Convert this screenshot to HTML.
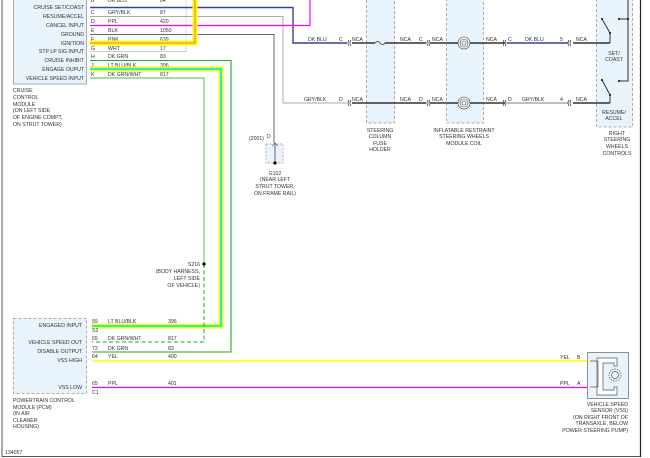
<!DOCTYPE html><html><head><style>body{margin:0;background:#fff}svg{display:block}text{font-family:"Liberation Sans",sans-serif;font-size:5.2px;fill:#333}</style></head><body>
<svg width="650" height="458" viewBox="0 0 650 458">
<rect x="0" y="0" width="650" height="458" fill="#fff"/>
<line x1="2" y1="0" x2="2" y2="457" stroke="#555" stroke-width="1"/>
<line x1="2" y1="456.5" x2="641" y2="456.5" stroke="#555"/>
<line x1="640.5" y1="0" x2="640.5" y2="457" stroke="#222" stroke-width="1.2"/>
<rect x="13.5" y="-1" width="73" height="85" fill="#e8f3fc" stroke="#999" stroke-width="0.8"/>
<g text-anchor="end">
<text x="84" y="9">CRUISE SET/COAST</text><text x="84" y="18">RESUME/ACCEL</text><text x="84" y="27">CANCEL INPUT</text><text x="84" y="36">GROUND</text><text x="84" y="45">IGNITION</text><text x="84" y="53">STP LP SIG INPUT</text><text x="84" y="62">CRUISE INHIBIT</text><text x="84" y="71">ENGAGE OUPUT</text><text x="84" y="80">VEHICLE SPEED INPUT</text>
</g>
<line x1="186" y1="0" x2="186" y2="52" stroke="#ccc" stroke-width="0.7"/>
<g>
<text x="91" y="2">B</text><text x="108" y="2">DK BLU</text><text x="160" y="2">84</text>
<text x="91" y="14">C</text><text x="108" y="14">GRY/BLK</text><text x="160" y="14">87</text>
<text x="91" y="23">D</text><text x="108" y="23">PPL</text><text x="160" y="23">420</text>
<text x="91" y="32">E</text><text x="108" y="32">BLK</text><text x="160" y="32">1050</text>
<text x="91" y="41">F</text><text x="108" y="41">PNK</text><text x="160" y="41">639</text>
<text x="91" y="50">G</text><text x="108" y="50">WHT</text><text x="160" y="50">17</text>
<text x="91" y="58">H</text><text x="108" y="58">DK GRN</text><text x="160" y="58">83</text>
<text x="91" y="67">J</text><text x="108" y="67">LT BLU/BLK</text><text x="160" y="67">396</text>
<text x="91" y="76">K</text><text x="108" y="76">DK GRN/WHT</text><text x="160" y="76">817</text>
</g>
<g fill="none" stroke-width="1">
<polyline points="90,7.5 293,7.5 293,43 347,43" stroke="#33449a" stroke-width="1.4"/>
<polyline points="90,16.5 283,16.5 283,103 347,103" stroke="#aaa"/>
<polyline points="90,25.5 310,25.5 310,0" stroke="#f0f" stroke-width="1.2"/>
<polyline points="90,34.5 274,34.5 274,143" stroke="#666"/>
<polyline points="90,43 195,43 195,0" stroke="#ff0" stroke-width="5"/>
<polyline points="90,43 195,43 195,0" stroke="#f66" stroke-width="1"/>
<polyline points="90,51.5 186,51.5" stroke="#ccc"/>
<polyline points="90,60.5 231,60.5 231,352 92,352" stroke="#2a2" stroke-width="1.1"/>
<polyline points="90,69 221,69 221,326 92,326" stroke="#ff0" stroke-width="5"/>
<polyline points="90,69 221,69 221,326 92,326" stroke="#0ee" stroke-width="1.8"/>
<polyline points="90,78 204,78 204,264" stroke="#4b4" stroke-width="0.9"/>
<polyline points="204,264 204,342 92,342" stroke="#2a2" stroke-width="1" stroke-dasharray="4,2.5"/>
<line x1="92" y1="361" x2="588" y2="361" stroke="#ff0" stroke-width="1.5"/>
<line x1="92" y1="387.5" x2="588" y2="387.5" stroke="#f0f" stroke-width="1.2"/>
</g>
<g>
<text x="13" y="92">CRUISE</text><text x="13" y="99">CONTROL</text><text x="13" y="106">MODULE</text><text x="13" y="112">(ON LEFT SIDE</text><text x="13" y="119">OF ENGINE COMPT,</text><text x="13" y="126">ON STRUT TOWER)</text>
</g>
<text x="249" y="140">(2001)</text><text x="267" y="138">D</text>
<rect x="266" y="144" width="17" height="19" fill="#e8f3fc" stroke="#999" stroke-width="0.7" stroke-dasharray="2,1.5"/>
<line x1="275" y1="143" x2="275" y2="163" stroke="#666"/>
<path d="M272 146 l3 -3 l3 3" fill="none" stroke="#666" stroke-width="0.7"/>
<circle cx="275" cy="163" r="1.6" fill="#000"/>
<g text-anchor="middle"><text x="275" y="175">G102</text><text x="275" y="181">(NEAR LEFT</text><text x="275" y="188">STRUT TOWER,</text><text x="275" y="195">ON FRAME RAIL)</text></g>
<circle cx="204" cy="264" r="1.6" fill="#000"/>
<g text-anchor="end"><text x="200" y="266">S216</text><text x="200" y="273">(BODY HARNESS,</text><text x="200" y="280">LEFT SIDE</text><text x="200" y="287">OF VEHICLE)</text></g>
<rect x="13.5" y="318.5" width="73" height="75" fill="#e8f3fc" stroke="#999" stroke-width="0.8" stroke-dasharray="3,2"/>
<g text-anchor="end"><text x="82" y="327">ENGAGED INPUT</text><text x="82" y="344">VEHICLE SPEED OUT</text><text x="82" y="353">DISABLE OUTPUT</text><text x="82" y="362">VSS HIGH</text><text x="82" y="389">VSS LOW</text></g>
<g><text x="92" y="323">59</text><text x="108" y="323">LT BLU/BLK</text><text x="168" y="323">396</text>
<text x="92" y="332">S2</text>
<text x="92" y="340">55</text><text x="108" y="340">DK GRN/WHT</text><text x="168" y="340">817</text>
<text x="92" y="350">72</text><text x="108" y="350">DK GRN</text><text x="168" y="350">83</text>
<text x="92" y="358">64</text><text x="108" y="358">YEL</text><text x="168" y="358">400</text>
<text x="92" y="385">65</text><text x="108" y="385">PPL</text><text x="168" y="385">401</text>
<text x="92" y="394">C1</text>
<text x="13" y="402">POWERTRAIN CONTROL</text><text x="13" y="409">MODULE (PCM)</text><text x="13" y="415">(IN AIR</text><text x="13" y="422">CLEANER</text><text x="13" y="428">HOUSING)</text>
<text x="5" y="454">134057</text></g>
<rect x="366.5" y="-1" width="28" height="124" fill="#e8f3fc" stroke="#999" stroke-width="0.8" stroke-dasharray="3,2"/>
<rect x="446.5" y="-1" width="37" height="124" fill="#e8f3fc" stroke="#999" stroke-width="0.8" stroke-dasharray="3,2"/>
<rect x="596.5" y="-1" width="36" height="128" fill="#e8f3fc" stroke="#999" stroke-width="0.8" stroke-dasharray="3,2"/>
<g fill="none" stroke="#333" stroke-width="1.4">
<line x1="352" y1="43" x2="375" y2="43"/><path d="M375 43 q3 -3 5 0 q3 3 5 0" stroke-width="0.8"/><line x1="385" y1="43" x2="426" y2="43"/>
<line x1="352" y1="103" x2="426" y2="103"/>
<line x1="430" y1="43" x2="505" y2="43"/><line x1="430" y1="103" x2="505" y2="103"/>
<line x1="573" y1="43" x2="610" y2="43"/><polyline points="610,43 610,33 602,19" stroke-width="1"/>
<line x1="573" y1="103" x2="610" y2="103"/><polyline points="610,103 610,95 602,80" stroke-width="1"/>
<polyline points="619,81 628,81 628,0" stroke-width="1"/><line x1="619" y1="19" x2="628" y2="19" stroke-width="1"/>
<line x1="507" y1="43" x2="568" y2="43" stroke="#33449a"/>
<line x1="507" y1="103" x2="568" y2="103" stroke="#aaa"/>
<g stroke-width="0.6"><circle cx="464" cy="43" r="6" fill="#fff"/><circle cx="464" cy="43" r="4"/><circle cx="464" cy="43" r="2"/><circle cx="464" cy="103" r="6" fill="#fff"/><circle cx="464" cy="103" r="4"/><circle cx="464" cy="103" r="2"/></g>
<g stroke-width="0.7"><path d="M349 40 q-2 3 0 6M351 40 q-2 3 0 6M428 40 q-2 3 0 6M430 40 q-2 3 0 6M349 100 q-2 3 0 6M351 100 q-2 3 0 6M428 100 q-2 3 0 6M430 100 q-2 3 0 6M503 40 q2 3 0 6M505 40 q2 3 0 6M503 100 q2 3 0 6M505 100 q2 3 0 6M569 40 q-2 3 0 6M571 40 q-2 3 0 6M569 100 q-2 3 0 6M571 100 q-2 3 0 6"/></g>
</g>
<g fill="#000"><circle cx="610" cy="33" r="1"/><circle cx="602" cy="19" r="1"/><circle cx="619" cy="19" r="1"/><circle cx="619" cy="81" r="1"/><circle cx="610" cy="95" r="1"/><circle cx="602" cy="80" r="1"/><circle cx="628" cy="19" r="1"/></g>
<g>
<text x="308" y="41">DK BLU</text><text x="339" y="41">C</text><text x="352" y="41">NCA</text>
<text x="304" y="101">GRY/BLK</text><text x="339" y="101">D</text><text x="352" y="101">NCA</text>
<text x="400" y="41">NCA</text><text x="419" y="41">C</text><text x="432" y="41">NCA</text>
<text x="400" y="101">NCA</text><text x="419" y="101">D</text><text x="432" y="101">NCA</text>
<text x="486" y="41">NCA</text><text x="508" y="41">C</text><text x="525" y="41">DK BLU</text><text x="560" y="41">5</text><text x="576" y="41">NCA</text>
<text x="486" y="101">NCA</text><text x="508" y="101">D</text><text x="522" y="101">GRY/BLK</text><text x="560" y="101">4</text><text x="576" y="101">NCA</text>
</g>
<g text-anchor="middle">
<text x="614" y="55">SET/</text><text x="614" y="61">COAST</text>
<text x="614" y="114">RESUME/</text><text x="614" y="120">ACCEL</text>
<text x="380" y="132">STEERING</text><text x="380" y="138">COLUMN</text><text x="380" y="145">FUSE</text><text x="380" y="151">HOLDER</text>
<text x="464" y="132">INFLATABLE RESTRAINT</text><text x="464" y="138">STEERING WHEELS</text><text x="464" y="145">MODULE COIL</text>
<text x="617" y="135">RIGHT</text><text x="617" y="141">STEERING</text><text x="617" y="148">WHEELS</text><text x="617" y="155">CONTROLS</text>
</g>
<rect x="587.5" y="352.5" width="41" height="46" fill="#e8f3fc" stroke="#777" stroke-width="0.8"/>
<path d="M597 358 h20 v8 h-3 v-3 h-11 v27 h11 v-3 h3 v8 h-20z" fill="#fff" stroke="#555" stroke-width="0.7"/>
<circle cx="615" cy="375" r="6" fill="none" stroke="#555" stroke-width="0.7" stroke-dasharray="1.5,1"/>
<circle cx="615" cy="375" r="3.5" fill="none" stroke="#555" stroke-width="0.7"/>
<path d="M590 361 h8 M590 387 h8 M598 361 v26" stroke="#555" stroke-width="0.7" fill="none"/>
<text x="560" y="359">YEL</text><text x="577" y="359">B</text><text x="560" y="385">PPL</text><text x="577" y="385">A</text>
<g text-anchor="end"><text x="628" y="406">VEHICLE SPEED</text><text x="628" y="412">SENSOR (VSS)</text><text x="628" y="419">(ON RIGHT FRONT OF</text><text x="628" y="425">TRANSAXLE, BELOW</text><text x="628" y="432">POWER STEERING PUMP)</text></g>
</svg></body></html>
